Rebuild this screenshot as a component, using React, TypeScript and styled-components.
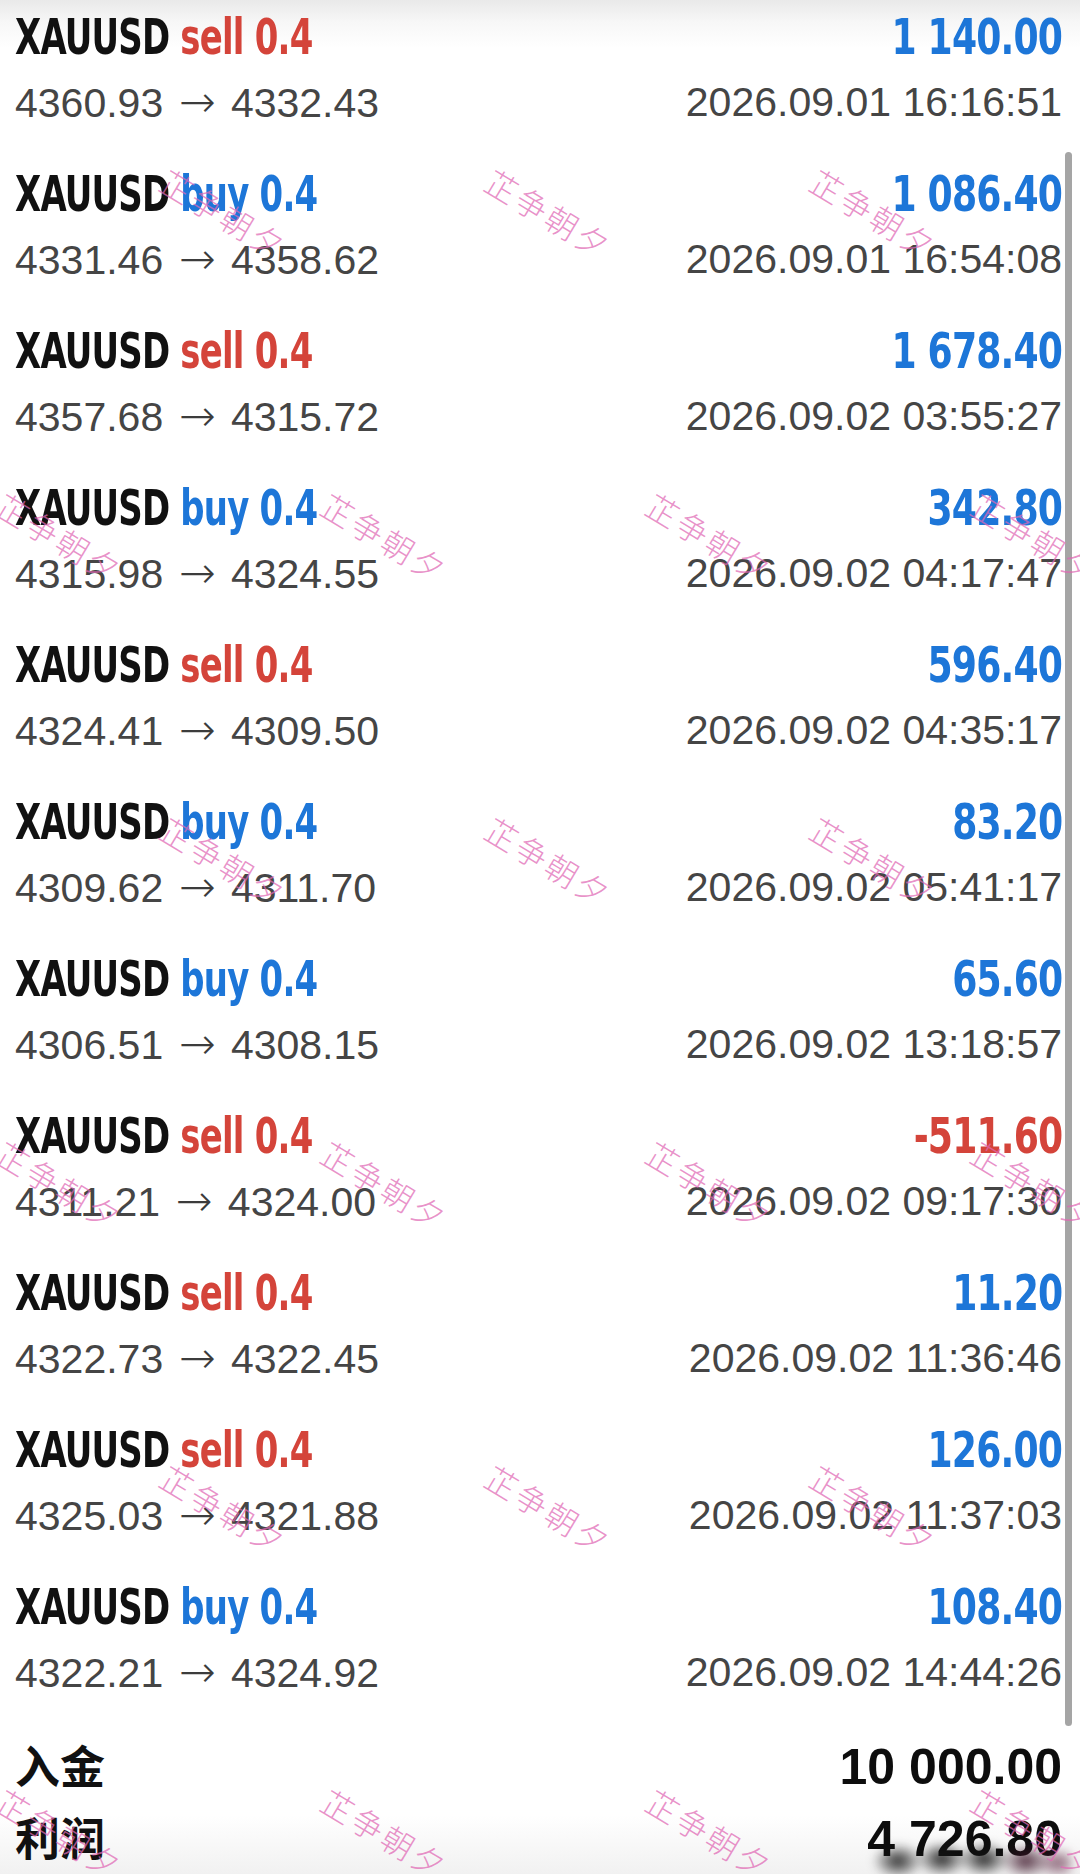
import styled, { createGlobalStyle } from 'styled-components';

const GlobalStyle = createGlobalStyle`
  html, body {
    margin: 0;
    padding: 0;
    background: #fff;
  }
`

const Page = styled.div`
  position: relative;
  width: 1080px;
  height: 1874px;
  box-sizing: border-box;
  padding: 0 18px 0 15px;
  overflow: hidden;
  background: linear-gradient(
    to bottom,
    #e9e9e9 0px,
    #f7f7f7 22px,
    #ffffff 48px,
    #ffffff 1815px,
    #f1f1f1 1874px
  );
`

const TradeRow = styled.div`
  display: grid;
  grid-template-columns: 1fr auto;
  grid-template-rows: 64px 64px;
  row-gap: 0;
  height: 157px;
  box-sizing: border-box;
  padding: 6px 0 23px;
  align-items: center;
`

// no condensed bold face is installed, so squeeze a condensed one a bit more
const Title = styled.div`
  justify-self: start;
  display: inline-block;
  font-family: "DejaVu Sans Condensed", "Liberation Sans", sans-serif;
  font-weight: 700;
  font-size: 49px;
  line-height: 64px;
  letter-spacing: -1px;
  color: #111;
  white-space: nowrap;
  transform: scaleX(0.77);
  transform-origin: left center;
`

const Side = styled.span<{ $side: 'buy' | 'sell' }>`
  color: ${p => (p.$side === 'buy' ? '#1d76d8' : '#d4443a')};
  margin-left: 14px;
`

const Amount = styled.div<{ $negative?: boolean }>`
  justify-self: end;
  display: inline-block;
  font-family: "DejaVu Sans Condensed", "Liberation Sans", sans-serif;
  font-weight: 700;
  font-size: 49px;
  line-height: 64px;
  letter-spacing: -1px;
  text-align: right;
  color: ${p => (p.$negative ? '#d4443a' : '#1d76d8')};
  white-space: nowrap;
  transform: scaleX(0.82);
  transform-origin: right center;
`

const Price = styled.div`
  font-family: "Liberation Sans", Arial, sans-serif;
  font-size: 41px;
  line-height: 64px;
  color: #454545;
  white-space: nowrap;
`

const Arrow = styled.span`
  display: inline-block;
  margin: 0 4px;
  font-family: "DejaVu Sans ExtraLight", "DejaVu Sans", sans-serif;
  font-weight: 200;
  font-size: 44px;
  color: #3c3c3c;
`

const DateText = styled(Price)`
  text-align: right;
`

const Summary = styled.div`
  display: flex;
  flex-direction: column;
  padding-top: 2px;
`

const SummaryRow = styled.div`
  display: flex;
  justify-content: space-between;
  align-items: baseline;
  height: 72px;
  line-height: 72px;
`

const SummaryLabel = styled.span`
  font-family: "Noto Sans CJK SC", sans-serif;
  font-weight: 700;
  font-size: 45px;
  color: #111;
`

const SummaryValue = styled.span`
  position: relative;
  font-family: "Liberation Sans", Arial, sans-serif;
  font-weight: 700;
  font-size: 50px;
  color: #0d0d0d;
`

// the blurred stamp that sits over the profit figure
const Smudge = styled.span`
  position: absolute;
  right: -10px;
  bottom: -4px;
  width: 200px;
  height: 36px;
  background:
    radial-gradient(ellipse 26px 18px at 26px 18px, rgba(20, 20, 20, 0.9), transparent),
    radial-gradient(ellipse 26px 18px at 70px 16px, rgba(20, 20, 20, 0.95), transparent),
    radial-gradient(ellipse 26px 18px at 112px 16px, rgba(20, 20, 20, 0.95), transparent),
    radial-gradient(ellipse 26px 18px at 154px 18px, rgba(60, 20, 40, 0.9), transparent),
    radial-gradient(ellipse 22px 16px at 186px 20px, rgba(90, 30, 60, 0.7), transparent);
  filter: blur(4px);
`

const Scrollbar = styled.div`
  position: absolute;
  left: 1065px;
  top: 152px;
  width: 7px;
  height: 1574px;
  border-radius: 4px;
  background: #a5a5a5;
`

const WatermarkLayer = styled.div`
  position: absolute;
  inset: 0;
  pointer-events: none;
  overflow: hidden;
`

const Mark = styled.span`
  position: absolute;
  transform: translate(-50%, -50%) rotate(31deg);
  font-family: "Noto Sans CJK SC", sans-serif;
  font-weight: 300;
  font-size: 32px;
  letter-spacing: 3px;
  color: rgba(224, 104, 180, 0.72);
  white-space: nowrap;
`

type Trade = {
  side: 'buy' | 'sell'
  open: string
  close: string
  amount: string
  time: string
}

const trades: Trade[] = [
  { side: 'sell', open: '4360.93', close: '4332.43', amount: '1 140.00', time: '2026.09.01 16:16:51' },
  { side: 'buy', open: '4331.46', close: '4358.62', amount: '1 086.40', time: '2026.09.01 16:54:08' },
  { side: 'sell', open: '4357.68', close: '4315.72', amount: '1 678.40', time: '2026.09.02 03:55:27' },
  { side: 'buy', open: '4315.98', close: '4324.55', amount: '342.80', time: '2026.09.02 04:17:47' },
  { side: 'sell', open: '4324.41', close: '4309.50', amount: '596.40', time: '2026.09.02 04:35:17' },
  { side: 'buy', open: '4309.62', close: '4311.70', amount: '83.20', time: '2026.09.02 05:41:17' },
  { side: 'buy', open: '4306.51', close: '4308.15', amount: '65.60', time: '2026.09.02 13:18:57' },
  { side: 'sell', open: '4311.21', close: '4324.00', amount: '-511.60', time: '2026.09.02 09:17:30' },
  { side: 'sell', open: '4322.73', close: '4322.45', amount: '11.20', time: '2026.09.02 11:36:46' },
  { side: 'sell', open: '4325.03', close: '4321.88', amount: '126.00', time: '2026.09.02 11:37:03' },
  { side: 'buy', open: '4322.21', close: '4324.92', amount: '108.40', time: '2026.09.02 14:44:26' },
]

// watermark lattice: rows every 324px, odd rows shifted half a column
const marks: { x: number; y: number }[] = []
for (let r = 0; r < 6; r++) {
  const y = 213 + r * 324
  const startX = r % 2 === 0 ? 224 : 60
  for (let x = startX; x < 1140; x += 325) {
    marks.push({ x, y })
  }
}

const App = () => {
  return (
    <>
      <GlobalStyle />
      <Page>
        {trades.map((t, i) => (
          <TradeRow key={i}>
            <Title>
              XAUUSD<Side $side={t.side}>{t.side} 0.4</Side>
            </Title>
            <Amount $negative={t.amount.startsWith('-')}>{t.amount}</Amount>
            <Price>
              {t.open} <Arrow>→</Arrow> {t.close}
            </Price>
            <DateText>{t.time}</DateText>
          </TradeRow>
        ))}
        <Summary>
          <SummaryRow>
            <SummaryLabel>入金</SummaryLabel>
            <SummaryValue>10 000.00</SummaryValue>
          </SummaryRow>
          <SummaryRow>
            <SummaryLabel>利润</SummaryLabel>
            <SummaryValue>
              4 726.80
              <Smudge />
            </SummaryValue>
          </SummaryRow>
        </Summary>
        <Scrollbar />
        <WatermarkLayer>
          {marks.map((m, i) => (
            <Mark key={i} style={{ left: m.x, top: m.y }}>芷争朝夕</Mark>
          ))}
        </WatermarkLayer>
      </Page>
    </>
  );
}

export default App;
